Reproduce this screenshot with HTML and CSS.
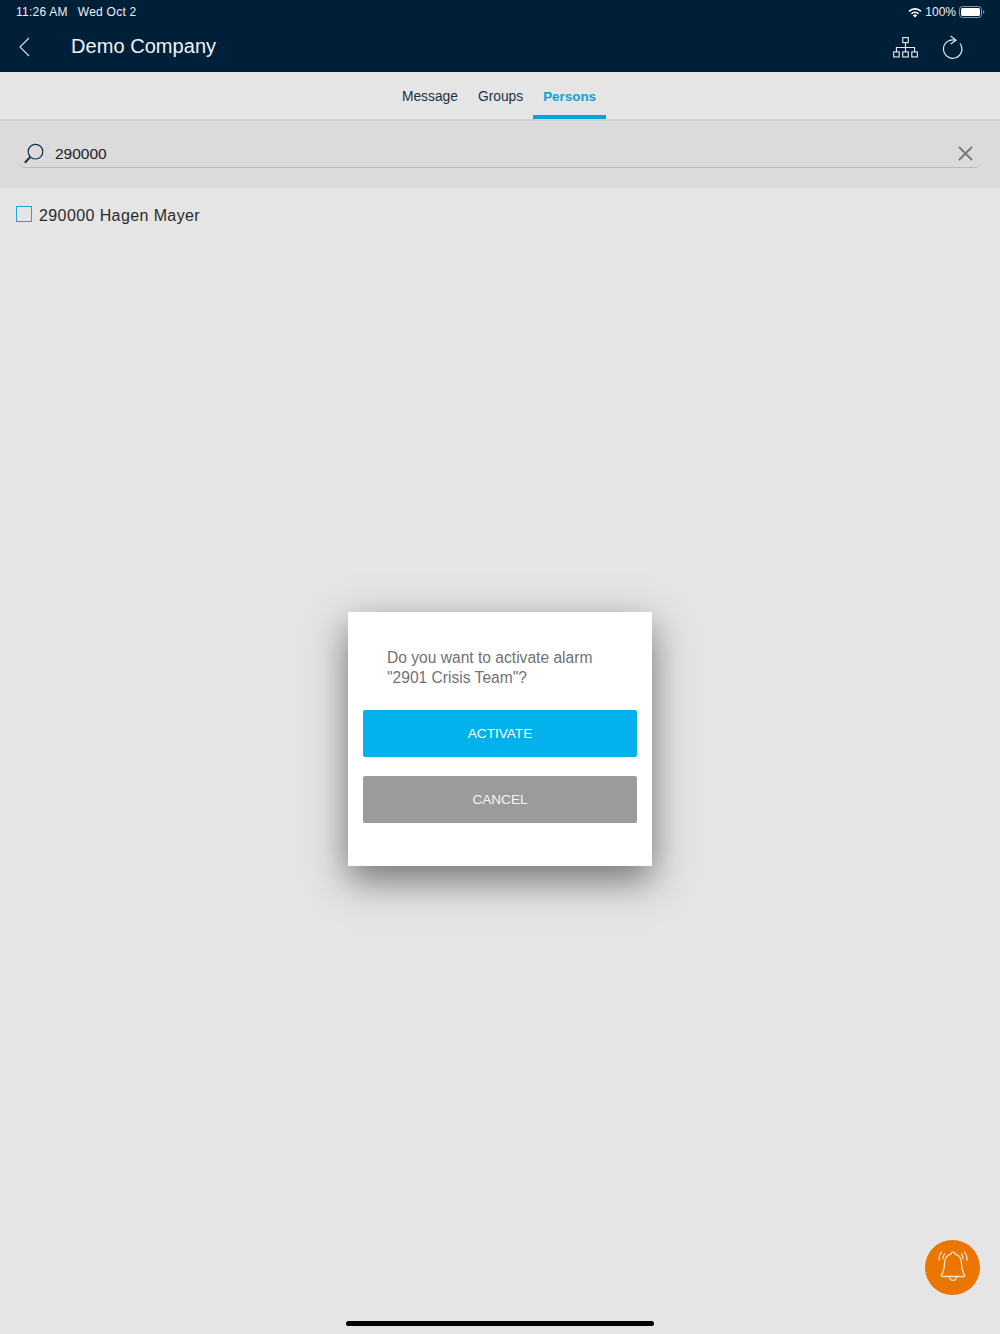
FILE: index.html
```html
<!DOCTYPE html>
<html lang="en">
<head>
<meta charset="utf-8">
<title>Demo Company</title>
<link rel="stylesheet" href="styles.css">
</head>
<body>
<div class="app">
  <header class="header">
    <div class="status">
      <div class="status-left"><span>11:26 AM</span><span>Wed Oct 2</span></div>
      <div class="status-right">
        <svg class="wifi" width="14" height="11" viewBox="0 0 14 11"><path d="M7 10.600 4.900 8.400a3 3 0 0 1 4.200 0z" fill="#fff"/><path d="M3.400 6.800a5.100 5.100 0 0 1 7.200 0M1 4.400a8.500 8.500 0 0 1 12 0" fill="none" stroke="#fff" stroke-width="1.600"/></svg>
        <span class="battery-text">100%</span>
        <svg class="battery" width="26" height="12" viewBox="0 0 26 12"><rect x=".5" y=".5" width="22" height="11" rx="3" fill="none" stroke="#8a96a3"/><rect x="2" y="2" width="19" height="8" rx="1.600" fill="#fff"/><path d="M24 4.200c.9.3 1.300 1 1.300 1.800s-.4 1.500-1.300 1.800z" fill="#8a96a3"/></svg>
      </div>
    </div>
    <div class="nav">
      <svg class="back" width="12" height="20" viewBox="0 0 12 20"><path d="M10 1 1 10l9 9" fill="none" stroke="#d5dae0" stroke-width="1.200"/></svg>
      <h1 class="title">Demo Company</h1>
      <svg class="org" width="25" height="21" viewBox="0 0 26 22" fill="none" stroke="#e6e9ec" stroke-width="1.200"><rect x="10.100" y=".6" width="5.800" height="5.300"/><rect x=".6" y="15.600" width="5.800" height="5.300"/><rect x="10.100" y="15.600" width="5.800" height="5.300"/><rect x="19.600" y="15.600" width="5.800" height="5.300"/><path d="M13 5.900v9.700M3.500 15.600v-4.600h19v4.600"/></svg>
      <svg class="refresh" width="22" height="26" viewBox="0 0 22 26" fill="none" stroke="#e6e9ec" stroke-width="1.200"><path d="M14.500 7.300a9.200 9.200 0 1 0 4.500 3.200"/><path d="M9.700 3 15 7.200 9.700 11"/></svg>
    </div>
  </header>

  <nav class="tabs">
    <span class="tab">Message</span>
    <span class="tab">Groups</span>
    <span class="tab active">Persons</span>
  </nav>

  <div class="search">
    <div class="search-field">
      <svg class="search-icon" width="22" height="22" viewBox="0 0 22 22" fill="none"><circle cx="12.500" cy="8.700" r="7.300" stroke="#16324c" stroke-width="1.200"/><path d="M7.300 14 1.800 19.800" stroke="#16324c" stroke-width="2"/></svg>
      <span class="search-text">290000</span>
      <svg class="clear" width="15" height="15" viewBox="0 0 15 15"><path d="M1 1l13 13M14 1 1 14" stroke="#777" stroke-width="1.800" fill="none"/></svg>
    </div>
  </div>

  <div class="list">
    <div class="row">
      <span class="check"></span>
      <span class="row-text">290000 Hagen Mayer</span>
    </div>
  </div>

  <div class="dialog">
    <p class="dialog-text">Do you want to activate alarm<br>"2901 Crisis Team"?</p>
    <div class="btn btn-primary">ACTIVATE</div>
    <div class="btn btn-secondary">CANCEL</div>
  </div>

  <div class="fab">
    <svg width="34" height="34" viewBox="0 0 34 34" fill="none" stroke="#f6e3d0" stroke-width="1.300"><path d="M17 3.200c1.300 0 2 .8 2.200 1.900 4 1 6 4.300 6.200 8.600.2 5 1 9.200 3.200 12.300.5.800.1 1.500-.8 1.500H6.200c-.9 0-1.300-.7-.8-1.500 2.200-3.100 3-7.300 3.200-12.300.2-4.300 2.200-7.600 6.200-8.600.2-1.100.9-1.900 2.200-1.900z"/><path d="M13.500 27.700c.2 2.300 1.600 3.600 3.500 3.600s3.300-1.300 3.500-3.600"/><path d="M5.800 2.500C3.600 5.400 2.800 8 3 11.500M8.800 4.300c-1.500 2-2 3.800-1.900 5.900M28.200 2.500c2.200 2.900 3 5.500 2.800 9M25.200 4.300c1.500 2 2 3.800 1.900 5.900" stroke-width="1.200"/></svg>
  </div>

  <div class="home-bar"></div>
</div>
</body>
</html>
```
FILE: styles.css
```css
* { box-sizing: border-box; }
html, body { margin: 0; padding: 0; }
body {
  font-family: "Liberation Sans", Arial, sans-serif;
  background: #e5e5e5;
}
.app {
  position: relative;
  width: 1000px;
  height: 1334px;
  overflow: hidden;
  display: flex;
  flex-direction: column;
  background: #e5e5e5;
}
.header {
  height: 72px;
  background: #001f38;
  color: #fff;
  display: flex;
  flex-direction: column;
}
.status {
  height: 24px;
  padding: 0 15px 0 16px;
  display: flex;
  justify-content: space-between;
  align-items: center;
  font-size: 12px;
  letter-spacing: .25px;
  color: #eef1f4;
}
.status-left { display: flex; gap: 10px; }
.status-right { display: flex; align-items: center; gap: 3px; }
.battery-text { letter-spacing: 0; }
.nav {
  flex: 1;
  display: flex;
  align-items: center;
  padding: 0 37px 4px 19px;
}
.back { margin: 2px 40px 0 0; }
.title {
  margin: 0;
  flex: 1;
  font-size: 20px;
  font-weight: 400;
  letter-spacing: .05px;
  color: #f2f4f6;
}
.org { margin: 2px 23px 0 0; }
.tabs {
  height: 49px;
  display: flex;
  justify-content: center;
  padding-right: 2px;
  border-bottom: 2px solid #d2d2d2;
  background: #e5e5e5;
}
.tab {
  height: 47px;
  padding: 0 10px;
  line-height: 50px;
  font-size: 13.800px;
  color: #1c3146;
}
.tab.active {
  color: #0aa3d8;
  font-size: 13.400px;
  font-weight: 700;
  border-bottom: 4px solid #0aa3d8;
}
.search {
  height: 67px;
  background: #dbdbdb;
  padding: 0 20px 20px;
  display: flex;
  align-items: flex-end;
}
.search-field {
  flex: 1;
  height: 30px;
  display: flex;
  align-items: flex-end;
  border-bottom: 1px solid #bcbcbc;
  border-radius: 0 0 5px 5px;
  padding: 0 7px 0 3px;
}
.search-icon { margin: 0 10px 2px 0; }
.search-text {
  flex: 1;
  font-size: 15.500px;
  line-height: 18px;
  color: #222;
  margin-bottom: 4px;
}
.clear { margin-bottom: 6px; }
.list { padding: 19px 16px; }
.row { display: flex; align-items: center; gap: 7px; }
.check {
  width: 16px;
  height: 16px;
  border: 1.500px solid #1ea6dc;
  margin-top: -5px;
}
.row-text {
  font-size: 16px;
  letter-spacing: .4px;
  color: #2a2a2a;
}
.dialog {
  position: absolute;
  left: 348px;
  top: 612px;
  width: 304px;
  height: 254px;
  background: #fff;
  padding: 36px 15px 0;
  box-shadow: 0 14px 36px rgba(0, 0, 0, .5);
}
.dialog-text {
  margin: 0 0 23px 24px;
  font-size: 15.600px;
  line-height: 19.500px;
  color: #727272;
}
.btn {
  height: 47px;
  padding-bottom: 1px;
  border-radius: 2px;
  display: flex;
  align-items: center;
  justify-content: center;
  font-size: 13.600px;
  color: #fff;
}
.btn-primary { background: #00b1ec; margin-bottom: 19px; }
.btn-secondary { background: #9b9b9b; color: #f4f4f4; padding-bottom: 0; }
.fab {
  position: absolute;
  left: 925px;
  top: 1240px;
  width: 55px;
  height: 55px;
  padding: 0 0 3px 1px;
  border-radius: 50%;
  background: #ea7600;
  display: flex;
  align-items: center;
  justify-content: center;
}
.home-bar {
  position: absolute;
  left: 346px;
  top: 1321px;
  width: 308px;
  height: 5px;
  border-radius: 3px;
  background: #000;
}
```
